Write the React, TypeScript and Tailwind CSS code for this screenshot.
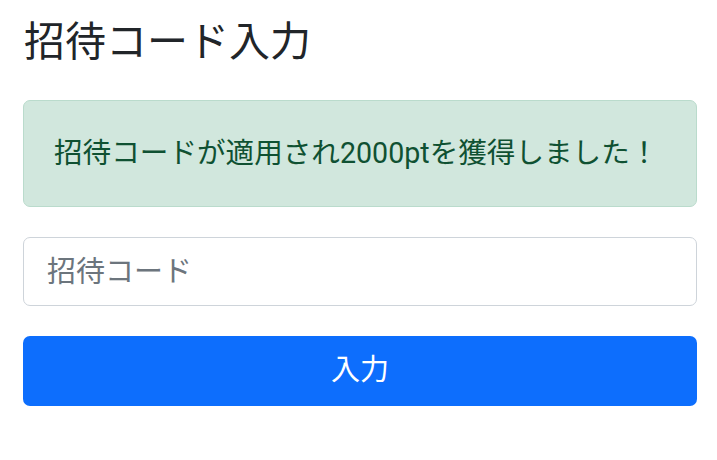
import React from "react";

export default function App() {
  return (
    <div
      className="w-[717px] h-[460px] bg-white pl-[23px] pr-[20px] pt-[18px]"
      style={{ fontFamily: 'Roboto, "Noto Sans CJK JP", sans-serif' }}
    >
      <h1 className="text-[41px] leading-[48px] font-normal text-[#212529] pl-[1px]">招待コード入力</h1>
      <div className="mt-[34px] rounded-[7px] border border-[#badbcc] bg-[#d1e7dd] px-[30px] py-[30px] text-[28.6px] leading-[45px] text-[#0f5132] whitespace-nowrap">
        招待コードが適用され2000ptを獲得しました！
      </div>
      <input
        className="mt-[30px] block w-full h-[69px] rounded-[7px] border border-[#ced4da] bg-white px-[23px] text-[29px] text-[#212529] placeholder:text-[#6c757d] outline-none"
        placeholder="招待コード"
      />
      <button className="mt-[30px] block w-full h-[70px] rounded-[7px] bg-[#0d6efd] text-[29px] text-white">
        入力
      </button>
    </div>
  );
}
